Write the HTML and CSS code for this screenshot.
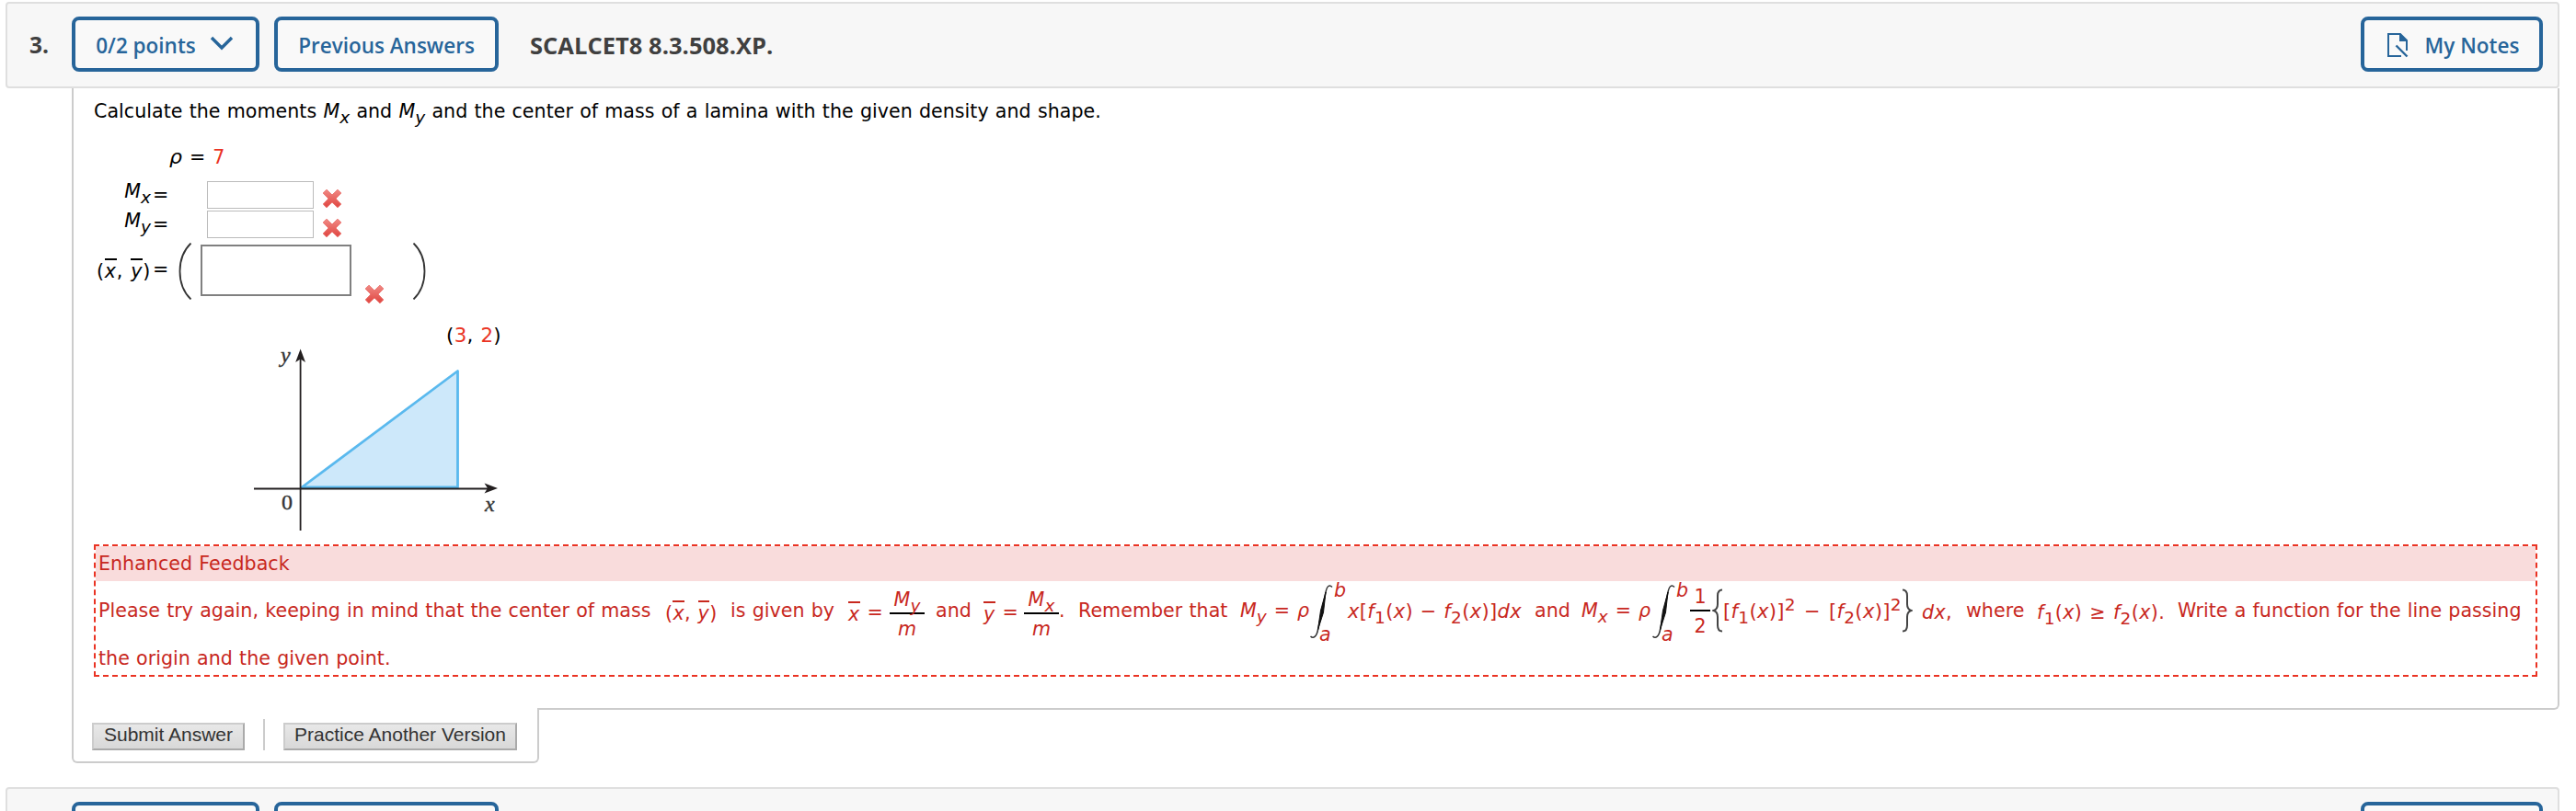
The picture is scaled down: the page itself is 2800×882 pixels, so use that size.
FILE: index.html
```html
<!DOCTYPE html>
<html lang="en">
<head>
  <meta charset="UTF-8" />
  <meta name="viewport" content="width=device-width, initial-scale=1.0" />
  <title>SCALCET8 8.3.508.XP.</title>
  <link rel="stylesheet" href="styles.css">
</head>
<body>
  <svg class="defs" width="0" height="0">
    <defs>
      <linearGradient id="crossFill" x1="0" y1="0" x2="0" y2="1">
        <stop offset="0" stop-color="#f08a85" />
        <stop offset="1" stop-color="#e0443f" />
      </linearGradient>
      <symbol id="cross" viewBox="0 0 22 22">
        <path d="M5 1.2 11 7l6-5.8L20.8 5 15 11l5.8 6-3.8 3.8-6-5.8-6 5.8L1.2 17 7 11 1.2 5z" fill="url(#crossFill)" stroke="#ec7772" stroke-width="1" stroke-linejoin="round" />
      </symbol>
      <symbol id="integral" viewBox="0 0 26 60">
        <path d="M25 3.5C22 .5 19.500 2 18 9L9.500 50C8 57.500 4.500 60 1.500 57" fill="none" stroke="#333" stroke-width="1.500" />
        <path d="M18 9 15.500 31 9.500 50 12.500 29z" fill="#111" stroke="#111" stroke-width="1" />
      </symbol>
      <symbol id="brace" viewBox="0 0 12 48">
        <path d="M11 1.500C7 1.500 6 4 6 8v9c0 4-1 6-4.500 7C5 25 6 27 6 31v9c0 4 1 6.500 5 6.500" fill="none" stroke="#444" stroke-width="2" />
      </symbol>
    </defs>
  </svg>

  <div class="question-header">
    <span class="number">3.</span>
    <button class="btn points">0/2 points
      <svg width="26" height="16" viewBox="0 0 26 16"><path d="M2 2l11 11L24 2" fill="none" stroke="#27659a" stroke-width="3.400" /></svg>
    </button>
    <button class="btn previous">Previous Answers</button>
    <h2>SCALCET8 8.3.508.XP.</h2>
    <button class="btn notes">
      <svg width="24" height="28" viewBox="0 0 24 28">
        <path d="M16 26H2V2h13l7 7v11" fill="none" stroke="#27659a" stroke-width="2" />
        <path d="M14 1v9h9z" fill="#27659a" />
        <path d="M10.500 14.500 22.500 26.500" stroke="#27659a" stroke-width="2.400" />
      </svg>
      My Notes
    </button>
  </div>

  <div class="question-body">
    <p class="prompt">Calculate the moments <i>M</i><sub>x</sub> and <i>M</i><sub>y</sub> and the center of mass of a lamina with the given density and shape.</p>
    <div class="density"><i>ρ</i><span>=</span><b>7</b></div>

    <div class="answer">
      <div class="label"><span class="up"><i>M</i><sub>x</sub></span><span class="eq">=</span></div>
      <input type="text" class="short" />
      <svg class="wrong" width="22" height="22"><use href="#cross" /></svg>
    </div>
    <div class="answer">
      <div class="label"><span class="up"><i>M</i><sub>y</sub></span><span class="eq">=</span></div>
      <input type="text" class="short" />
      <svg class="wrong" width="22" height="22"><use href="#cross" /></svg>
    </div>
    <div class="answer pair">
      <div class="label"><span>(<i class="bar">x</i>, <i class="bar">y</i>)</span><span class="eq">=</span></div>
      <svg class="paren" width="15" height="62" viewBox="0 0 15 62"><path d="M13.500.5C-2.500 16-2.500 46 13.500 61.500" fill="none" stroke="#333" stroke-width="1.800" /></svg>
      <input type="text" class="long" />
      <svg class="wrong" width="22" height="22"><use href="#cross" /></svg>
      <svg class="paren" width="15" height="62" viewBox="0 0 15 62"><path d="M1.500.5C17.500 16 17.500 46 1.500 61.500" fill="none" stroke="#333" stroke-width="1.800" /></svg>
    </div>

    <svg class="graph" width="290" height="240" viewBox="270 345 290 240">
      <polygon points="328,530 497.500,403.500 497.500,530" fill="#cde8fa" stroke="#5ab9ee" stroke-width="2.800" stroke-linejoin="round" />
      <path d="M276 531.500h256M326.600 388v189" stroke="#231f20" stroke-width="1.800" fill="none" />
      <path d="M326.600 379.500 332 394l-5.400-3.500-5.400 3.500z" fill="#231f20" />
      <path d="M541 531 526.500 536.500l3.500-5.500-3.500-5.500z" fill="#231f20" />
      <text class="axis" x="305" y="394"><tspan font-style="italic">y</tspan></text>
      <text class="axis" x="527" y="556"><tspan font-style="italic">x</tspan></text>
      <text class="axis" x="306" y="554">0</text>
      <text class="point" x="485" y="372">(<tspan fill="#ea3323">3</tspan>, <tspan fill="#ea3323">2</tspan>)</text>
    </svg>

    <div class="feedback">
      <h3>Enhanced Feedback</h3>
      <div class="formula">
        <span>Please try again, keeping in mind that the center of mass</span>
        <span class="math">(<i class="bar">x</i>, <i class="bar">y</i>)</span>
        <span>is given by</span>
        <span class="math spread"><i class="bar">x</i><span>=</span></span>
        <span class="frac"><span><i>M</i><sub>y</sub></span><i>m</i></span>
        <span>and</span>
        <span class="math spread"><i class="bar">y</i><span>=</span></span>
        <span class="frac"><span><i>M</i><sub>x</sub></span><i>m</i></span>
        <span>.</span>
        <span>Remember that</span>
        <span class="spread"><span><i>M</i><sub>y</sub></span><span>=</span><i>ρ</i></span>
        <span class="integral"><i>b</i><svg width="26" height="60"><use href="#integral" /></svg><i>a</i></span>
        <span class="func"><i>x</i>[<i>f</i><sub class="n">1</sub>(<i>x</i>) − <i>f</i><sub class="n">2</sub>(<i>x</i>)]<i>dx</i></span>
        <span>and</span>
        <span class="spread"><span><i>M</i><sub>x</sub></span><span>=</span><i>ρ</i></span>
        <span class="integral"><i>b</i><svg width="26" height="60"><use href="#integral" /></svg><i>a</i></span>
        <span class="frac half"><span>1</span><span>2</span></span>
        <svg width="12" height="48"><use href="#brace" /></svg>
        <span class="func squares"><span>[<i>f</i><sub class="n">1</sub>(<i>x</i>)]<sup>2</sup></span><span>−</span><span>[<i>f</i><sub class="n">2</sub>(<i>x</i>)]<sup>2</sup></span></span>
        <svg class="flip" width="12" height="48"><use href="#brace" /></svg>
        <span class="math"><i>dx</i>,</span>
        <span>where</span>
        <span class="math spread"><span><i>f</i><sub class="n">1</sub>(<i>x</i>)</span><span>≥</span><span><i>f</i><sub class="n">2</sub>(<i>x</i>).</span></span>
        <span>Write a function for the line passing</span>
      </div>
      <p>the origin and the given point.</p>
    </div>
  </div>

  <div class="actions">
    <button>Submit Answer</button>
    <span class="divider"></span>
    <button>Practice Another Version</button>
  </div>

  <div class="question-header next">
    <span class="number"></span>
    <button class="btn points"></button>
    <button class="btn previous"></button>
    <button class="btn notes"></button>
  </div>
</body>
</html>
```
FILE: styles.css
```css
* {
  margin: 0;
  padding: 0;
  box-sizing: border-box;
}
body {
  height: 882px;
  overflow: hidden;
  padding: 2px 18px 0 6px;
  background: white;
  color: black;
  font-family: Verdana, 'DejaVu Sans', sans-serif;
  font-size: 20.6px;
  letter-spacing: 0.03px;
  word-spacing: 0.03em;
}
.defs {
  position: absolute;
}
.question-header {
  display: flex;
  align-items: flex-start;
  height: 94px;
  padding: 14px 16px 0 24px;
  border: 2px solid #dfdfdf;
  border-radius: 4px;
  background: #f7f7f7;
  font-family: 'Open Sans', sans-serif;
  word-spacing: 0;
}
.number {
  width: 46px;
  font-size: 24.5px;
  font-weight: bold;
  line-height: 62px;
  color: #404040;
}
.btn {
  display: flex;
  align-items: center;
  justify-content: center;
  height: 60px;
  padding-top: 2px;
  border: 4px solid #27659a;
  border-radius: 8px;
  background: #f9f9f9;
  color: #27659a;
  font: 600 22.5px 'Open Sans', sans-serif;
}
.points {
  width: 204px;
  padding-right: 2px;
  gap: 15px;
}
.points svg {
  margin-top: -5px;
}
.previous {
  width: 244px;
  margin-left: 16px;
}
.question-header h2 {
  margin-left: 34px;
  font-size: 25.5px;
  line-height: 62px;
  color: #404040;
}
.notes {
  width: 198px;
  margin-left: auto;
  padding-left: 2px;
  gap: 18px;
}
.next {
  height: 26px;
  border-bottom: none;
  border-radius: 4px 4px 0 0;
  overflow: hidden;
}
.question-body {
  height: 676px;
  margin-left: 72px;
  padding: 8px 22px 0;
  border: 2px solid #ccc;
  border-top: none;
  border-radius: 0 0 6px 0;
}
sub, sup {
  font-size: 18.5px;
  line-height: 0;
}
sub {
  font-style: italic;
  vertical-align: -6px;
}
sub.n {
  font-style: normal;
}
sup {
  vertical-align: 8px;
}
.prompt {
  height: 56px;
  line-height: 34px;
}
.density {
  display: flex;
  gap: 8px;
  height: 36px;
  padding-left: 82px;
  line-height: 22px;
}
.density i {
  font-size: 22px;
}
.density b {
  color: #ea3323;
  font-weight: normal;
}
.answer {
  display: flex;
  align-items: flex-start;
  height: 32px;
}
.label {
  display: flex;
  justify-content: flex-end;
  width: 80px;
  padding-top: 4px;
  line-height: 24px;
  white-space: nowrap;
}
.up {
  margin-top: -4px;
}
.eq {
  width: 16px;
  margin-left: 2px;
}
.bar {
  display: inline-block;
  height: 20px;
  line-height: 24px;
  border-top: 2px solid currentColor;
}
input {
  background: white;
}
.short {
  width: 116px;
  height: 30px;
  margin: 1px 9px 0 43px;
  border: 1px solid #bbb;
}
.short + .wrong {
  margin-top: 9px;
}
.pair {
  height: 80px;
}
.pair .label {
  padding-top: 21px;
  letter-spacing: 0.8px;
}
.paren {
  margin: 4px 9px 0 12px;
}
.long {
  width: 164px;
  height: 56px;
  margin-top: 6px;
  border: 2px solid #808080;
}
.long + .wrong {
  margin: 49px 18px 0 14px;
}
.graph {
  display: block;
  margin: 5px 0 7px 168px;
}
.axis {
  font: 24px 'Liberation Serif', serif;
  fill: #333;
  stroke: #333;
  stroke-width: 0.4;
}
.point {
  font-size: 21.4px;
  letter-spacing: 0.3px;
}
.feedback {
  height: 144px;
  border: 2px dashed #ea3323;
  color: #c8281e;
}
.feedback h3 {
  height: 38px;
  padding-left: 3px;
  background: #f9dcdc;
  font-size: 20.6px;
  font-weight: normal;
  line-height: 38px;
}
.feedback p {
  padding-left: 3px;
  line-height: 45px;
}
/* one column for each run of text or formula part */
.formula {
  display: grid;
  grid-template-columns: 616px 71px 128px 45px 50px 52px 44px 38px 21px 176px 75px 42px 203px 51px 76px 42px 24px 12px 194px 22px 48px 77px 153px auto;
  align-items: center;
  height: 62px;
  padding: 1px 0 0 3px;
  line-height: 24px;
  white-space: nowrap;
}
.math {
  padding-top: 4px;
  letter-spacing: 0.4px;
}
.func {
  padding-top: 1px;
  font-size: 21px;
  letter-spacing: 0.35px;
}
.spread {
  display: flex;
  gap: 8px;
}
.frac {
  display: flex;
  flex-direction: column;
  align-items: center;
  width: 38px;
  margin: 7px 0 -7px;
}
.frac > :first-child {
  width: 100%;
  height: 26px;
  border-bottom: 2px solid black;
  text-align: center;
  line-height: 21px;
}
.frac > :last-child {
  line-height: 32px;
}
.half {
  width: 22px;
  margin: 4px 0 -4px;
}
.integral {
  display: flex;
  position: relative;
  height: 60px;
  margin-top: 2px;
}
.integral i {
  position: absolute;
  left: 27px;
  top: -5px;
}
.integral i:last-child {
  left: 11px;
  top: 43px;
}
.squares {
  display: flex;
  gap: 9px;
}
.flip {
  transform: scaleX(-1);
}
.actions {
  display: flex;
  align-items: flex-start;
  width: 508px;
  height: 60px;
  margin: -2px 0 26px 72px;
  padding: 12px 20px 0;
  border: 2px solid #ccc;
  border-top: none;
  border-radius: 0 0 6px 6px;
  background: white;
}
.actions button {
  height: 30px;
  margin-top: 4px;
  padding: 0 8px 5px;
  border: 2px solid #ccc;
  border-right-color: #aaa;
  border-bottom-color: #aaa;
  background: linear-gradient(#e8e8e8, #d8d8d8);
  color: #333;
  font: 21px 'Liberation Sans', Arial, sans-serif;
  line-height: 21px;
  white-space: nowrap;
}
.actions button:first-child {
  width: 166px;
}
.actions button:last-child {
  width: 254px;
}
.divider {
  width: 2px;
  height: 34px;
  margin: 0 20px;
  background: #ccc;
}
```
